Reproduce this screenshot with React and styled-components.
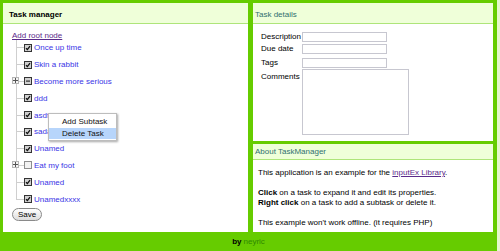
import styled, { createGlobalStyle } from "styled-components";

const GlobalStyle = createGlobalStyle`
  html, body {
    margin: 0;
    padding: 0;
    background: #e4f7cc;
  }
  body {
    font-family: "Liberation Sans", Arial, sans-serif;
    font-size: 8px;
    color: #000;
  }
`;

//styles
const Frame = styled.div`
  width: 497px;
  height: 251px;
  background: #66cc00;
  display: flex;
  flex-direction: column;
  box-sizing: border-box;
`;
const Columns = styled.div`
  display: grid;
  grid-template-columns: 245px 240px;
  column-gap: 5px;
  padding: 3px 4px 0 3px;
  height: 229px;
`;
const Side = styled.div`
  display: flex;
  flex-direction: column;
  gap: 3px;
`;
const Panel = styled.div`
  background: #fff;
  display: flex;
  flex-direction: column;
  height: ${(p) => p.$h || "auto"};
  position: relative;
`;
const Header = styled.div`
  height: ${(p) => p.$size || "19px"};
  line-height: ${(p) => p.$size || "19px"};
  padding-top: ${(p) => p.$top || "1px"};
  background: #efffd9;
  border-bottom: 1px solid #aee57a;
  padding-left: ${(p) => p.$pad || "2px"};
  font-weight: ${(p) => (p.$bold ? "bold" : "normal")};
  color: ${(p) => (p.$bold ? "#000" : "#2f6f6f")};
  flex: none;
  box-sizing: content-box;
`;
const TreeBody = styled.div`
  padding: 8px 0 0 9px;
  position: relative;
`;
const RootLink = styled.a`
  color: #5a2a8a;
  text-decoration: underline;
  display: block;
  height: 8px;
  line-height: 8px;
`;
const Tree = styled.div`
  position: relative;
  margin-top: -0.5px;
  margin-left: 4px;
`;
const Row = styled.div`
  height: 16.8px;
  display: flex;
  align-items: center;
  position: relative;
`;
const Branch = styled.span`
  position: absolute;
  left: 0;
  top: 0;
  width: 1px;
  height: ${(p) => (p.$last ? "50%" : "100%")};
  background: #cfcfcf;
`;
const Stub = styled.span`
  width: 8px;
  height: 1px;
  background: #cfcfcf;
  flex: none;
`;
const Expander = styled.span`
  position: absolute;
  left: -4px;
  top: 50%;
  margin-top: -4px;
  width: 7px;
  height: 7px;
  border: 1px solid #b5b5b5;
  background: #f4f4f4;
  box-sizing: border-box;
  display: flex;
  align-items: center;
  justify-content: center;
`;
const Label = styled.a`
  color: #3a35e6;
  margin-left: 2px;
  white-space: nowrap;
`;
const Menu = styled.div`
  position: absolute;
  left: 45px;
  top: 89px;
  width: 67px;
  background: #fff;
  border: 1px solid #bdbdbd;
  box-shadow: 1px 1px 2px rgba(0, 0, 0, 0.35);
  padding: 2px 0 1px;
`;
const MenuItem = styled.div`
  height: 11.5px;
  line-height: 12px;
  padding-left: 13px;
  background: ${(p) => (p.$active ? "#b7d5fb" : "transparent")};
  color: #111;
`;
const SaveButton = styled.button`
  font-family: inherit;
  font-size: 8px;
  margin-top: 0.5px;
  width: 30px;
  height: 13px;
  padding: 0;
  border: 1px solid #8a8a8a;
  border-radius: 7px;
  background: linear-gradient(#ffffff, #dcdcdc);
  color: #000;
`;
const Form = styled.div`
  padding: 8px 0 0 8px;
  display: grid;
  grid-template-columns: 41px auto;
  grid-template-rows: 12px 14px 11px 66px;
  align-items: start;
`;
const FieldLabel = styled.label`
  line-height: 10px;
  padding-top: ${(p) => p.$top || "0"};
`;
const Input = styled.input`
  width: 85px;
  height: 10px;
  box-sizing: border-box;
  border: 1px solid #c7c7d0;
  padding: 0;
  margin: 0;
`;
const TextArea = styled.textarea`
  width: 107px;
  height: 66px;
  box-sizing: border-box;
  border: 1px solid #c7c7d0;
  padding: 0;
  margin: 0;
  resize: none;
`;
const About = styled.div`
  padding: 8px 0 0 5px;
  line-height: 10.5px;
  p {
    margin: 0 0 9px;
  }
`;
const LibLink = styled.a`
  color: #5a2a8a;
  text-decoration: underline;
`;
const Footer = styled.div`
  flex: 1;
  display: flex;
  align-items: center;
  justify-content: center;
  b {
    font-weight: bold;
    margin-right: 2px;
  }
  a {
    color: #2f8a00;
  }
`;

function Check({ state }) {
  return (
    <svg width="8" height="8" viewBox="0 0 8 8" style={{ flex: "none" }}>
      <rect
        x="0.5"
        y="0.5"
        width="7"
        height="7"
        fill={state === "empty" ? "#f2f2f2" : "#d0d0d0"}
        stroke={state === "empty" ? "#8d8d8d" : "#333"}
      />
      {state === "checked" && (
        <path d="M2 4.3 L3.4 5.6 L6 2.2" fill="none" stroke="#111" strokeWidth="1.3" />
      )}
      {state === "partial" && <rect x="2" y="3.5" width="4" height="1.2" fill="#333" />}
    </svg>
  );
}

function Plus() {
  return (
    <svg width="5" height="5" viewBox="0 0 5 5">
      <path d="M0 2.5 H5 M2.5 0 V5" stroke="#555" strokeWidth="1" />
    </svg>
  );
}

const tasks = [
  { label: "Once up time", state: "checked" },
  { label: "Skin a rabbit", state: "checked" },
  { label: "Become more serious", state: "partial", children: true },
  { label: "ddd", state: "checked" },
  { label: "asdf", state: "checked" },
  { label: "sada", state: "checked" },
  { label: "Unamed", state: "checked" },
  { label: "Eat my foot", state: "empty", children: true },
  { label: "Unamed", state: "checked" },
  { label: "Unamedxxxx", state: "checked" },
];

export default function App() {
  return (
    <>
      <GlobalStyle />
      <Frame>
        <Columns>
          <Panel>
            <Header $bold $pad="6px" $top="3px" $size="17px">Task manager</Header>
            <TreeBody>
              <RootLink href="#">Add root node</RootLink>
              <Tree>
                {tasks.map((t, i) => (
                  <Row key={i}>
                    <Branch $last={i === tasks.length - 1} />
                    {t.children && (
                      <Expander>
                        <Plus />
                      </Expander>
                    )}
                    <Stub />
                    <Check state={t.state} />
                    <Label>{t.label}</Label>
                  </Row>
                ))}
              </Tree>
              <SaveButton>Save</SaveButton>
              <Menu>
                <MenuItem>Add Subtask</MenuItem>
                <MenuItem $active>Delete Task</MenuItem>
              </Menu>
            </TreeBody>
          </Panel>
          <Side>
            <Panel $h="138px">
              <Header $top="3px" $size="17px">Task details</Header>
              <Form>
                <FieldLabel>Description</FieldLabel>
                <Input />
                <FieldLabel>Due date</FieldLabel>
                <Input />
                <FieldLabel>Tags</FieldLabel>
                <Input />
                <FieldLabel $top="3px">Comments</FieldLabel>
                <TextArea />
              </Form>
            </Panel>
            <Panel $h="88px">
              <Header $top="0" $size="15px">About TaskManager</Header>
              <About>
                <p>
                  This application is an example for the <LibLink href="#">inputEx Library</LibLink>.
                </p>
                <p>
                  <b>Click</b> on a task to expand it and edit its properties.
                  <br />
                  <b>Right click</b> on a task to add a subtask or delete it.
                </p>
                <p>This example won't work offline. (it requires PHP)</p>
              </About>
            </Panel>
          </Side>
        </Columns>
        <Footer>
          <b>by</b>
          <a>neyric</a>
        </Footer>
      </Frame>
    </>
  );
}
